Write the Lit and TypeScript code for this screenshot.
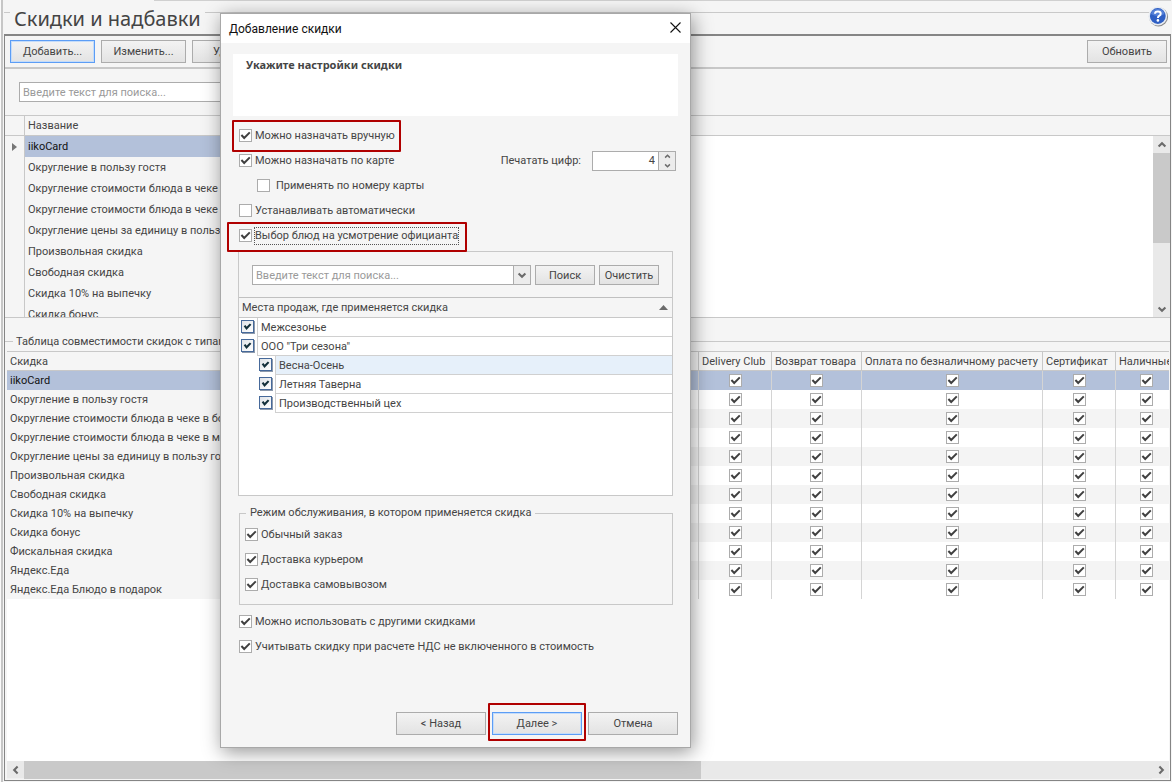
import { LitElement, html, css, svg } from "lit";
import { customElement, state } from "lit/decorators.js";
import { classMap } from "lit/directives/class-map.js";

const DISCOUNTS = [
  "iikoCard",
  "Округление в пользу гостя",
  "Округление стоимости блюда в чеке в большую сторону",
  "Округление стоимости блюда в чеке в меньшую сторону",
  "Округление цены за единицу в пользу гостя",
  "Произвольная скидка",
  "Свободная скидка",
  "Скидка 10% на выпечку",
  "Скидка бонус",
  "Фискальная скидка",
  "Яндекс.Еда",
  "Яндекс.Еда Блюдо в подарок",
];

const PAYMENTS = [
  { name: "iikoCard", width: 53 },
  { name: "Delivery Club", width: 73 },
  { name: "Возврат товара", width: 90 },
  { name: "Оплата по безналичному расчету", width: 181 },
  { name: "Сертификат", width: 73 },
  { name: "Наличные", width: 62 },
];

const PLACES = [
  { name: "Межсезонье", level: 0 },
  { name: 'ООО "Три сезона"', level: 0 },
  { name: "Весна-Осень", level: 1, active: true },
  { name: "Летняя Таверна", level: 1 },
  { name: "Производственный цех", level: 1 },
];

const chevron = (turn: number) => html`<svg class="chev" viewBox="0 0 10 10" aria-hidden="true">
  ${svg`<path d="M1.6 3.4 L5 6.8 L8.4 3.4" transform="rotate(${turn} 5 5)"></path>`}
</svg>`;

@customElement("app-root")
export class AppRoot extends LitElement {
  @state() private selected = 0;

  static styles = css`
    :host {
      display: block;
      font: 11px/16px Roboto, "Noto Sans", sans-serif;
      color: #454545;
    }
    *,
    *::after {
      box-sizing: border-box;
    }
    button,
    input {
      font: inherit;
      color: inherit;
      margin: 0;
    }
    .page {
      position: relative;
      min-height: 100vh;
      display: flex;
      flex-direction: column;
      background: #f5f5f5;
      padding: 0 1px 1px 4px;
      overflow: hidden;
      box-shadow: inset 1px 0 #fafafa, inset 3px 0 #c6c6c6;
    }
    .caption {
      display: flex;
      height: 34px;
      gap: 4px;
      background: linear-gradient(#d0d0d0, #d0d0d0) 150px 0 / 100% 1px no-repeat;
    }
    .caption h1 {
      margin: 0;
      padding-top: 5px;
      font-family: "Noto Sans", "Open Sans", sans-serif;
      font-size: 20px;
      line-height: 28px;
      font-weight: 400;
      color: #444;
      white-space: nowrap;
    }
    .rule {
      height: 1px;
      margin-top: 12px;
      background: #c9c9c9;
    }
    .rule.short {
      width: 6px;
    }
    .rule.long {
      flex: 1;
    }
    .help {
      border: 0;
      padding: 0;
      background: none;
      width: 22px;
      height: 22px;
      margin: 5px 2px 0 -6px;
    }
    .help svg {
      display: block;
    }
    .panel {
      flex: 1;
      display: flex;
      flex-direction: column;
      border: 1px solid #858585;
      border-top-width: 2px;
      min-width: 0;
    }
    .toolbar {
      display: flex;
      gap: 6px;
      padding: 4px 3px 4px 5px;
      border-bottom: 2px solid #c8c8c8;
    }
    .btn {
      height: 23px;
      width: 85px;
      padding: 1px 0 0;
      border: 1px solid #acacac;
      background: linear-gradient(#f3f3f3, #e3e3e3);
      line-height: 20px;
      white-space: nowrap;
    }
    .btn.focus {
      border-color: #5c9df5;
      box-shadow: inset 0 0 0 1px #c4dcfa;
    }
    .btn.refresh {
      width: 80px;
      margin-left: auto;
    }
    .search {
      padding: 13px 14px;
      border-bottom: 1px solid #c8c8c8;
    }
    .field {
      height: 20px;
      border: 1px solid #acacac;
      background: #fff;
      padding: 0 3px;
      outline: 0;
      min-width: 0;
    }
    .field::placeholder {
      color: #9a9a9a;
      opacity: 1;
    }
    .search .field {
      width: 400px;
      display: block;
    }
    .grid-head {
      display: flex;
      height: 20px;
      border-bottom: 1px solid #c8c8c8;
      padding-left: 19px;
    }
    .grid-head span {
      border-left: 1px solid #c8c8c8;
      padding-left: 3px;
      line-height: 19px;
    }
    .grid {
      display: flex;
      height: 182px;
      border-bottom: 1px solid #c8c8c8;
      background: #fff;
    }
    .names {
      margin: 0;
      padding: 0;
      list-style: none;
      width: 560px;
      overflow: hidden;
      background: #f5f5f5;
    }
    .names li {
      display: grid;
      grid-template-columns: 19px 1fr;
      height: 21px;
      line-height: 21px;
      white-space: nowrap;
    }
    .names .mark {
      display: flex;
      align-items: center;
      justify-content: center;
    }
    .names .mark svg {
      width: 5px;
      height: 8px;
      fill: #777;
    }
    .names .name {
      border-left: 1px solid #c8c8c8;
      padding-left: 3px;
    }
    .names .sel .name {
      background: #b3c1da;
      color: #111;
    }
    .bar {
      background: #f0f0f0;
      display: flex;
    }
    .bar.v {
      width: 17px;
      margin-left: auto;
      flex-direction: column;
    }
    .bar.h {
      height: 18px;
    }
    .bar button {
      width: 17px;
      height: 17px;
      border: 0;
      padding: 0;
      background: #e9e9e9;
      display: grid;
      place-items: center;
    }
    .track {
      flex: 1;
      background: #e9e9e9;
    }
    .bar.v .thumb {
      height: 61%;
    }
    .bar.h .thumb {
      width: 60%;
      height: 100%;
    }
    .thumb {
      background: #c9c9c9;
    }
    .chev {
      width: 10px;
      height: 10px;
      display: block;
      fill: none;
      stroke: #6b6b6b;
      stroke-width: 2.1;
    }
    .legend {
      display: flex;
      gap: 3px;
      padding-top: 15px;
      height: 33px;
    }
    .legend h2 {
      margin: 0;
      font-size: 11px;
      font-weight: 400;
      line-height: 17px;
      white-space: nowrap;
    }
    .legend .rule {
      margin-top: 8px;
    }
    .legend .short {
      width: 8px;
    }
    .compat {
      flex: 1;
      margin: 0 1px 1px 2px;
      display: flex;
      flex-direction: column;
      background: #fff;
      min-width: 0;
    }
    .scroll {
      flex: 1;
      overflow: hidden;
    }
    .compat table {
      border-collapse: separate;
      border-spacing: 0;
      table-layout: fixed;
      width: 1171px;
    }
    .compat th,
    .compat td {
      padding: 0 0 0 3px;
      height: 19px;
      text-align: left;
      font-weight: 400;
      white-space: nowrap;
      overflow: hidden;
      line-height: 19px;
      border-right: 1px solid #d4d4d4;
    }
    .compat thead th {
      height: 20px;
      padding-top: 1px;
      line-height: 17px;
      border-top: 1px solid #c8c8c8;
      border-bottom: 1px solid #c8c8c8;
      border-right-color: #c8c8c8;
      background: #f5f5f5;
    }
    .compat td {
      text-align: center;
      padding: 0;
    }
    .compat tbody th {
      background: #f5f5f5;
    }
    .compat tbody tr:nth-child(odd) td {
      background: #f4f4f4;
    }
    .compat tbody tr.sel td,
    .compat tbody tr.sel th {
      background: #b3c1da;
      color: #111;
    }
    .box {
      appearance: none;
      display: block;
      flex: none;
      width: 13px;
      height: 13px;
      border: 1px solid #acacac;
      background: #fff;
    }
    .box:checked {
      background: #fff
        url("data:image/svg+xml,%3Csvg xmlns='http://www.w3.org/2000/svg' viewBox='0 0 11 11'%3E%3Cpath d='M1.4 5 L4.2 8 L9.8 2.4' fill='none' stroke='%23404040' stroke-width='2'/%3E%3C/svg%3E");
    }
    td .box {
      margin: 0 auto;
    }

    .dialog {
      position: absolute;
      left: 220px;
      top: 13px;
      width: 471px;
      border: 1px solid #a8a8a8;
      background: #f5f5f5;
      box-shadow: 2px 4px 18px rgba(0, 0, 0, 0.42);
      display: flex;
      flex-direction: column;
    }
    .title {
      height: 29px;
      background: #fff;
      display: flex;
      align-items: center;
      justify-content: space-between;
      padding: 0 8px;
      color: #111;
    }
    .title h2 {
      margin: 0;
      font-size: 12px;
      line-height: 16px;
      font-weight: 400;
    }
    .close {
      border: 0;
      padding: 0;
      background: none;
      width: 13px;
      height: 13px;
      margin-bottom: 2px;
    }
    .close svg {
      display: block;
      stroke: #111;
      stroke-width: 1.1;
    }
    .hint {
      margin: 11px 12px 7px;
      height: 62px;
      background: #fff;
      padding: 3px 13px;
      font-family: "Noto Sans", "Open Sans", sans-serif;
      font-weight: 700;
    }
    .hint h3 {
      margin: 0;
      font: inherit;
    }
    .form {
      padding: 0 17px;
    }
    .row {
      position: relative;
      display: flex;
      align-items: center;
      height: 25px;
      padding-left: 1px;
    }
    .row.sub {
      padding-left: 19px;
    }
    .opt {
      display: flex;
      align-items: center;
      gap: 3px;
      white-space: nowrap;
    }
    .opt span {
      margin-top: 1px;
    }
    .row.sub .opt {
      gap: 6px;
    }
    .focused span {
      outline: 1px dotted #555;
    }
    .digits {
      margin: 0 -3px 0 auto;
      display: flex;
      align-items: center;
      gap: 11px;
    }
    .spin {
      display: flex;
      width: 84px;
      height: 20px;
    }
    .spin .field {
      flex: 1;
      width: 0;
      text-align: right;
    }
    .steps {
      width: 17px;
      display: flex;
      flex-direction: column;
      border: 1px solid #acacac;
      border-left: 0;
      background: #ececec;
    }
    .steps button {
      flex: 1;
      border: 0;
      padding: 0;
      background: none;
      display: grid;
      place-items: center;
      min-height: 0;
    }
    .steps .chev {
      width: 7px;
      height: 7px;
    }
    .callout::after {
      content: "";
      position: absolute;
      border: 2px solid #b00000;
      border-radius: 1px;
      pointer-events: none;
    }
    .callout.manual::after {
      inset: -3px auto -4px -6px;
      width: 169px;
    }
    .callout.waiter::after {
      inset: -1px auto -4px -11px;
      width: 240px;
    }
    .places {
      margin-top: 3px;
      height: 245px;
      border: 1px solid #c8c8c8;
      background: #fff;
    }
    .find {
      display: flex;
      padding: 13px 13px 12px;
      background: #f5f5f5;
      border-bottom: 1px solid #c0c0c0;
    }
    .find .field {
      flex: 1;
    }
    .find .drop {
      width: 17px;
      border: 1px solid #acacac;
      border-left: 0;
      background: #ececec;
      padding: 0;
      display: grid;
      place-items: center;
    }
    .find .btn {
      width: 60px;
      height: 20px;
      margin-left: 4px;
      line-height: 17px;
    }
    .places h3 {
      margin: 0;
      display: flex;
      justify-content: space-between;
      align-items: center;
      height: 20px;
      padding: 0 4px 0 3px;
      font: inherit;
      background: #f5f5f5;
      border-bottom: 1px solid #c8c8c8;
    }
    .places h3 svg {
      fill: #6b6b6b;
    }
    .tree {
      margin: 0;
      padding: 0;
      list-style: none;
    }
    .tree label {
      display: flex;
      padding-left: 2px;
      height: 19px;
    }
    .tree .deep {
      padding-left: 20px;
    }
    .tree .leaf {
      flex: 1;
      margin-left: 2px;
      border-left: 1px solid #d0d0d0;
      border-bottom: 1px solid #d0d0d0;
      padding-left: 3px;
      line-height: 19px;
    }
    .tree .active .leaf {
      background: #e6f0fa;
    }
    .tick {
      appearance: none;
      flex: none;
      width: 13px;
      height: 13px;
      margin: 2px 1px 0 0;
      border: 1px solid #46699a;
      box-shadow: 1px 1px 0 #8d9aac;
      background: linear-gradient(135deg, #dfe3e8, #fff);
    }
    .tick:checked {
      background:
        url("data:image/svg+xml,%3Csvg xmlns='http://www.w3.org/2000/svg' viewBox='0 0 12 12'%3E%3Cpath d='M2.8 5 L5 8 L9.4 3.4' fill='none' stroke='%23122f3a' stroke-width='2.3'/%3E%3C/svg%3E"),
        linear-gradient(135deg, #dfe3e8, #fff);
    }
    .modes {
      margin: 9px 0 4px 1px;
      padding: 1px 5px 7px 4px;
      border: 1px solid #c8c8c8;
      min-width: 0;
    }
    .modes legend {
      margin-left: 2px;
      padding: 0 4px;
      line-height: 16px;
    }
    .footer {
      display: flex;
      justify-content: flex-end;
      gap: 6px;
      padding: 53px 12px 12px;
    }
    .footer .btn {
      width: 90px;
    }
    .footer .callout {
      position: relative;
    }
    .footer .callout::after {
      inset: -9px -4px -6px;
    }
  `;

  private option(text: string, checked: boolean, focused = false) {
    return html`<label class=${classMap({ opt: true, focused })}>
      <input class="box" type="checkbox" .checked=${checked} /><span>${text}</span>
    </label>`;
  }

  private renderList() {
    return html`
      <div class="grid-head"><span>Название</span></div>
      <div class="grid">
        <ul class="names">
          ${DISCOUNTS.slice(0, 9).map(
            (name, i) => html`<li class=${classMap({ sel: i === this.selected })} @click=${() => (this.selected = i)}>
              <span class="mark">
                ${i === this.selected ? html`<svg viewBox="0 0 5 8"><path d="M0 0 L5 4 L0 8 Z"></path></svg>` : ""}
              </span>
              <span class="name">${name}</span>
            </li>`
          )}
        </ul>
        <div class="bar v">
          <button aria-label="Вверх">${chevron(180)}</button>
          <div class="track"><div class="thumb"></div></div>
          <button aria-label="Вниз">${chevron(0)}</button>
        </div>
      </div>
    `;
  }

  private renderCompat() {
    return html`
      <div class="legend">
        <span class="rule short"></span>
        <h2>Таблица совместимости скидок с типами оплат</h2>
        <span class="rule long"></span>
      </div>
      <div class="compat">
        <div class="scroll">
          <table>
            <colgroup>
              <col style="width:639px" />
              ${PAYMENTS.map((p) => html`<col style="width:${p.width}px" />`)}
            </colgroup>
            <thead>
              <tr>
                <th scope="col">Скидка</th>
                ${PAYMENTS.map((p) => html`<th scope="col">${p.name}</th>`)}
              </tr>
            </thead>
            <tbody>
              ${DISCOUNTS.map(
                (name, i) => html`<tr class=${classMap({ sel: i === 0 })}>
                  <th scope="row">${name}</th>
                  ${PAYMENTS.map(
                    (p) => html`<td>
                      <input class="box" type="checkbox" .checked=${true} aria-label=${name + ": " + p.name} />
                    </td>`
                  )}
                </tr>`
              )}
            </tbody>
          </table>
        </div>
        <div class="bar h">
          <button aria-label="Влево">${chevron(90)}</button>
          <div class="track"><div class="thumb"></div></div>
          <button aria-label="Вправо">${chevron(270)}</button>
        </div>
      </div>
    `;
  }

  private renderDialog() {
    return html`<section class="dialog" role="dialog" aria-labelledby="dialog-title">
      <header class="title">
        <h2 id="dialog-title">Добавление скидки</h2>
        <button class="close" aria-label="Закрыть">
          <svg width="13" height="13" viewBox="0 0 13 13"><path d="M1.5 1.5 L11.5 11.5 M11.5 1.5 L1.5 11.5"></path></svg>
        </button>
      </header>
      <div class="hint"><h3>Укажите настройки скидки</h3></div>
      <div class="form">
        <div class="row callout manual">${this.option("Можно назначать вручную", true)}</div>
        <div class="row">
          ${this.option("Можно назначать по карте", true)}
          <div class="digits">
            <label for="digits">Печатать цифр:</label>
            <div class="spin">
              <input class="field" id="digits" type="text" inputmode="numeric" value="4" />
              <div class="steps">
                <button aria-label="Больше">${chevron(180)}</button>
                <button aria-label="Меньше">${chevron(0)}</button>
              </div>
            </div>
          </div>
        </div>
        <div class="row sub">${this.option("Применять по номеру карты", false)}</div>
        <div class="row">${this.option("Устанавливать автоматически", false)}</div>
        <div class="row callout waiter">${this.option("Выбор блюд на усмотрение официанта", true, true)}</div>

        <div class="places">
          <div class="find">
            <input class="field" type="text" placeholder="Введите текст для поиска..." aria-label="Поиск места продаж" />
            <button class="drop" aria-label="Открыть список">${chevron(0)}</button>
            <button class="btn">Поиск</button>
            <button class="btn">Очистить</button>
          </div>
          <h3>
            Места продаж, где применяется скидка
            <svg width="9" height="5" viewBox="0 0 9 5"><path d="M4.5 0 L9 5 H0 Z"></path></svg>
          </h3>
          <ul class="tree">
            ${PLACES.map(
              (p) => html`<li class=${classMap({ active: !!p.active })}>
                <label class=${classMap({ deep: p.level > 0 })}>
                  <input class="tick" type="checkbox" .checked=${true} /><span class="leaf">${p.name}</span>
                </label>
              </li>`
            )}
          </ul>
        </div>

        <fieldset class="modes">
          <legend>Режим обслуживания, в котором применяется скидка</legend>
          <div class="row">${this.option("Обычный заказ", true)}</div>
          <div class="row">${this.option("Доставка курьером", true)}</div>
          <div class="row">${this.option("Доставка самовывозом", true)}</div>
        </fieldset>
        <div class="row">${this.option("Можно использовать с другими скидками", true)}</div>
        <div class="row">${this.option("Учитывать скидку при расчете НДС не включенного в стоимость", true)}</div>
      </div>
      <footer class="footer">
        <button class="btn">&lt; Назад</button>
        <div class="callout"><button class="btn focus">Далее &gt;</button></div>
        <button class="btn">Отмена</button>
      </footer>
    </section>`;
  }

  render() {
    return html`<main class="page">
      <header class="caption">
        <span class="rule short"></span>
        <h1>Скидки и надбавки</h1>
        <span class="rule long"></span>
        <button class="help" aria-label="Справка">
          <svg width="22" height="22" viewBox="0 0 22 22">
            <circle cx="11.5" cy="11.8" r="9.6" fill="#8a8a8a"></circle>
            <circle cx="10.8" cy="11" r="9.4" fill="#e8ecf2"></circle>
            <circle cx="10.8" cy="11" r="7.9" fill="#2f5fc4"></circle>
            <path d="M4 9 A7 6.5 0 0 1 17.6 9 Q11 13 4 9 Z" fill="#6f97e6" opacity=".6"></path>
            <path d="M8 8.8 Q8 6.4 10.9 6.4 Q13.7 6.4 13.7 8.7 Q13.7 10.1 12.1 10.9 Q10.9 11.6 10.9 13" fill="none" stroke="#fff" stroke-width="2"></path>
            <circle cx="10.9" cy="15.4" r="1.3" fill="#fff"></circle>
          </svg>
        </button>
      </header>
      <div class="panel">
        <div class="toolbar">
          <button class="btn focus">Добавить...</button>
          <button class="btn">Изменить...</button>
          <button class="btn">Удалить</button>
          <button class="btn refresh">Обновить</button>
        </div>
        <div class="search">
          <input class="field" type="text" placeholder="Введите текст для поиска..." aria-label="Поиск скидки" />
        </div>
        ${this.renderList()} ${this.renderCompat()}
      </div>
      ${this.renderDialog()}
    </main>`;
  }
}
